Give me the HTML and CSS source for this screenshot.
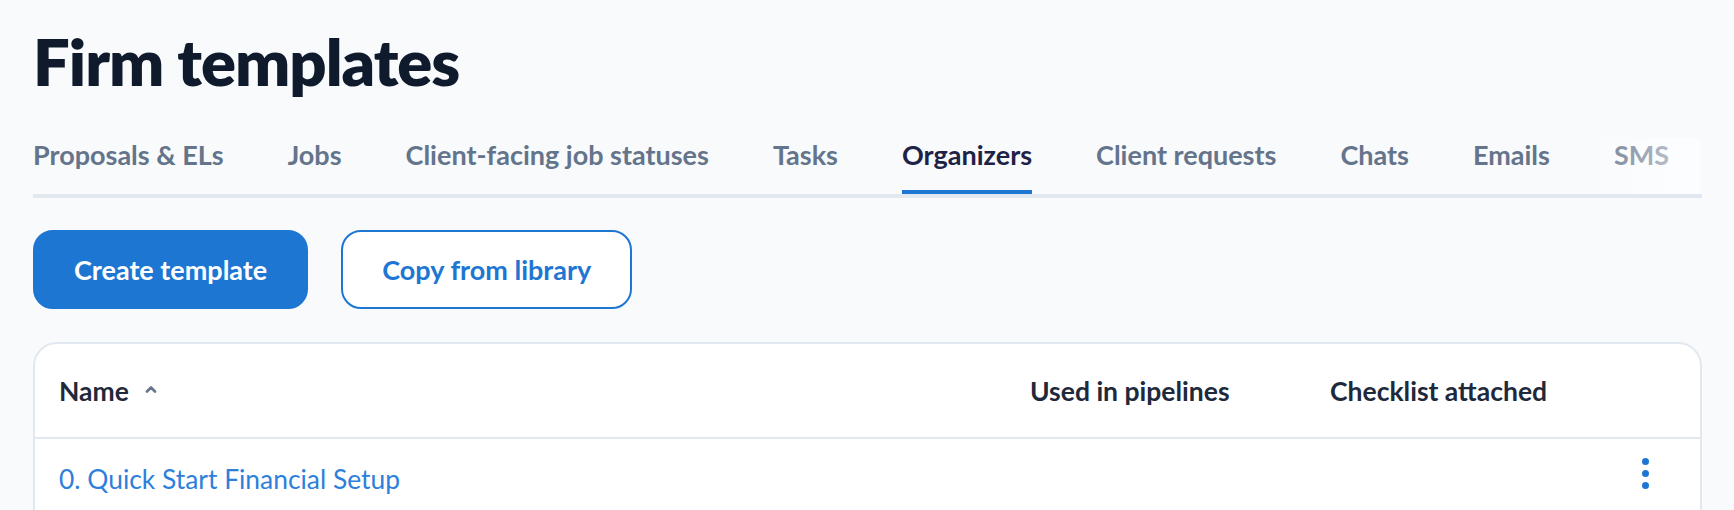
FILE: index.html
```html
<!DOCTYPE html>
<html lang="en">
<head>
    <meta charset="UTF-8">
    <meta name="viewport" content="width=device-width, initial-scale=1.0">
    <title>Firm templates</title>
    <link rel="stylesheet" href="styles.css">
</head>
<body>
    <div class="page">
        <h1 class="title">Firm templates</h1>

        <!-- Tabs -->
        <div class="tabs">
            <a href="#" class="tab">Proposals &amp; ELs</a>
            <a href="#" class="tab">Jobs</a>
            <a href="#" class="tab">Client-facing job statuses</a>
            <a href="#" class="tab">Tasks</a>
            <a href="#" class="tab active">Organizers</a>
            <a href="#" class="tab">Client requests</a>
            <a href="#" class="tab">Chats</a>
            <a href="#" class="tab">Emails</a>
            <a href="#" class="tab">SMS</a>
        </div>

        <div class="actions">
            <button class="btn btn-primary">Create template</button>
            <button class="btn btn-outline">Copy from library</button>
        </div>

        <!-- Templates table -->
        <div class="card">
            <div class="row head">
                <div class="cell sortable">
                    Name
                    <svg class="caret" width="12" height="8" viewBox="0 0 12 8">
                        <polyline points="2,6.5 6,2.5 10,6.5" fill="none" stroke="#64748b" stroke-width="2.6" stroke-linecap="round" stroke-linejoin="round"/>
                    </svg>
                </div>
                <div class="cell">Used in pipelines</div>
                <div class="cell">Checklist attached</div>
                <div class="cell"></div>
            </div>
            <div class="row">
                <div class="cell"><a href="#" class="link">0. Quick Start Financial Setup</a></div>
                <div class="cell"></div>
                <div class="cell"></div>
                <div class="cell">
                    <button class="kebab"><span></span><span></span><span></span></button>
                </div>
            </div>
        </div>
    </div>
</body>
</html>
```

FILE: styles.css
```css
body {
    margin: 0;
    padding: 0;
    background-color: #f8fafc;
    font-family: Lato, "Open Sans", sans-serif;
}
.page {
    padding: 21px 32px 0 33px;
}
.title {
    margin: 0;
    font-size: 65px;
    line-height: 80px;
    font-weight: 800;
    letter-spacing: -1px;
    color: #0f1b2d;
}
.tabs {
    position: relative;
    display: flex;
    gap: 64px;
    margin-top: 37px;
    border-bottom: 4px solid #e2e8f0;
}
.tabs::after {
    content: "";
    position: absolute;
    right: 2px;
    top: 0;
    bottom: 0;
    width: 120px;
    background: linear-gradient(to right, rgba(255, 255, 255, 0), rgba(255, 255, 255, 0.7));
}
.tab {
    font-size: 27px;
    line-height: 34px;
    font-weight: 700;
    color: #64748b;
    text-decoration: none;
    padding-bottom: 18px;
    border-bottom: 4px solid transparent;
    white-space: nowrap;
}
.tab.active {
    color: #1e2247;
    border-bottom-color: #1e76d3;
}
.actions {
    display: flex;
    gap: 33px;
    margin-top: 32px;
}
.btn {
    height: 79px;
    padding: 0 39px;
    border-radius: 20px;
    border: 2px solid #1e76d3;
    font-family: Lato, "Open Sans", sans-serif;
    font-size: 27px;
    font-weight: 700;
    cursor: pointer;
}
.btn-primary {
    background-color: #1e76d3;
    color: #ffffff;
}
.btn-outline {
    background-color: #ffffff;
    color: #1e76d3;
}
.card {
    margin-top: 33px;
    background-color: #ffffff;
    border: 2px solid #e2e8f0;
    border-radius: 24px;
    height: 300px;
}
.row {
    display: grid;
    grid-template-columns: 1fr 300px 295px 40px;
    align-items: center;
    padding: 0 35px 0 24px;
    height: 80px;
}
.row.head {
    height: 93px;
    border-bottom: 2px solid #e2e8f0;
    font-size: 26.5px;
    font-weight: 700;
    color: #1e293b;
}
.sortable {
    display: flex;
    align-items: center;
    gap: 16px;
}
.caret {
    margin-top: -4px;
}
.link {
    font-size: 26.4px;
    color: #2d7fdb;
    text-decoration: none;
}
.kebab {
    display: flex;
    flex-direction: column;
    align-items: center;
    gap: 5px;
    margin: 0 auto 12px;
    padding: 0;
    border: none;
    background: none;
    cursor: pointer;
}
.kebab span {
    width: 7px;
    height: 7px;
    border-radius: 50%;
    background-color: #1e76d3;
}
```
